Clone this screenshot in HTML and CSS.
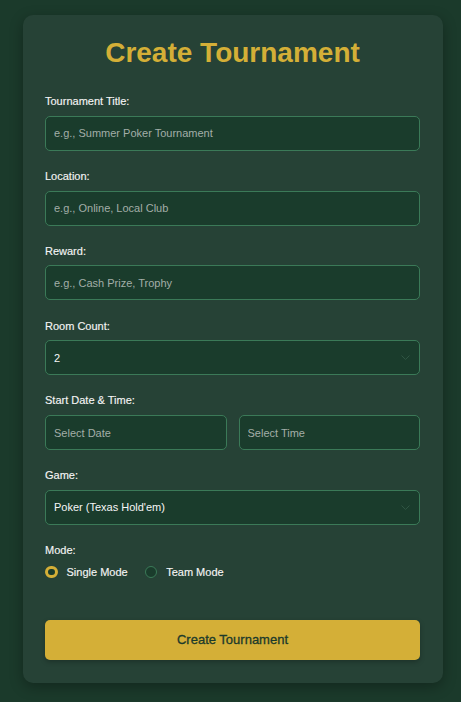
FILE: index.html
```html
<!DOCTYPE html>
<html lang="en">
<head>
<meta charset="utf-8">
<title>Create Tournament</title>
<link rel="stylesheet" href="styles.css">
</head>
<body>
<form class="card">
  <h1 class="title">Create Tournament</h1>

  <div class="group">
    <label class="label" for="t-title">Tournament Title:</label>
    <input class="field" id="t-title" type="text" placeholder="e.g., Summer Poker Tournament">
  </div>

  <div class="group">
    <label class="label" for="t-loc">Location:</label>
    <input class="field" id="t-loc" type="text" placeholder="e.g., Online, Local Club">
  </div>

  <div class="group">
    <label class="label" for="t-reward">Reward:</label>
    <input class="field" id="t-reward" type="text" placeholder="e.g., Cash Prize, Trophy">
  </div>

  <div class="group">
    <label class="label" for="t-rooms">Room Count:</label>
    <div class="select-wrap">
      <select class="field select" id="t-rooms">
        <option>2</option>
      </select>
      <svg class="chevron" width="9" height="5" viewBox="0 0 9 5"><path d="M0.5 0.5 L4.5 4.5 L8.5 0.5" fill="none" stroke="#2f5543" stroke-width="1"/></svg>
    </div>
  </div>

  <div class="group">
    <label class="label" for="t-date">Start Date &amp; Time:</label>
    <div class="row">
      <input class="field" id="t-date" type="text" placeholder="Select Date">
      <input class="field" id="t-time" type="text" placeholder="Select Time">
    </div>
  </div>

  <div class="group">
    <label class="label" for="t-game">Game:</label>
    <div class="select-wrap">
      <select class="field select" id="t-game">
        <option>Poker (Texas Hold'em)</option>
      </select>
      <svg class="chevron" width="9" height="5" viewBox="0 0 9 5"><path d="M0.5 0.5 L4.5 4.5 L8.5 0.5" fill="none" stroke="#2f5543" stroke-width="1"/></svg>
    </div>
  </div>

  <div class="group mode">
    <span class="label">Mode:</span>
    <div class="radios">
      <label class="radio"><input type="radio" name="mode" checked><span>Single Mode</span></label>
      <label class="radio"><input type="radio" name="mode"><span>Team Mode</span></label>
    </div>
  </div>

  <button class="submit" type="button">Create Tournament</button>
</form>
</body>
</html>
```

FILE: styles.css
```css
html, body {
  margin: 0;
  padding: 0;
  background: #1b3a2b;
  min-height: 100%;
}

body {
  font-family: "Liberation Sans", Arial, sans-serif;
  padding: 15px 0 20px 22.5px;
  box-sizing: border-box;
}

.card {
  width: 420px;
  box-sizing: border-box;
  background: #264236;
  border-radius: 10px;
  padding: 22px 22.5px 22.5px;
  box-shadow: 0 4px 14px rgba(0, 0, 0, 0.3);
}

.title {
  margin: 0 0 26px;
  text-align: center;
  color: #d4af37;
  font-size: 28px;
  font-weight: bold;
  line-height: normal;
}

.group {
  margin-bottom: 19.2px;
}

.label {
  display: block;
  color: #f4f4f4;
  font-size: 11px;
  line-height: 12.65px;
  margin-bottom: 8px;
  -webkit-text-stroke: 0.15px #f4f4f4;
}

.field {
  display: block;
  width: 100%;
  height: 35px;
  box-sizing: border-box;
  margin: 0;
  padding: 0 8px;
  font-family: "Liberation Sans", Arial, sans-serif;
  font-size: 11px;
  color: #f6f6f6;
  background: #1a3c2c;
  border: 1px solid #3b7a58;
  border-radius: 5px;
  outline: none;
}

.field::placeholder {
  color: #a3aea8;
  opacity: 1;
}

.select {
  -webkit-appearance: none;
  appearance: none;
}

.select-wrap {
  position: relative;
}

.chevron {
  position: absolute;
  right: 10.5px;
  top: 15px;
  pointer-events: none;
}

.row {
  display: flex;
  gap: 12px;
}

.row .field {
  flex: 1 1 0;
  min-width: 0;
}

.mode {
  margin-bottom: 40px;
}

.radios {
  display: flex;
  align-items: center;
  gap: 17px;
  height: 15px;
}

.radio {
  display: flex;
  align-items: center;
  gap: 9px;
  color: #f4f4f4;
  font-size: 11px;
  -webkit-text-stroke: 0.15px #f4f4f4;
}

.radio input {
  -webkit-appearance: none;
  appearance: none;
  width: 12.5px;
  height: 12.5px;
  margin: 0;
  border-radius: 50%;
  box-sizing: border-box;
  border: 1px solid #3b7a58;
  background: #1a3c2c;
}

.radio input:checked {
  border: 3px solid #d4af37;
  background: #1a3c2c;
}

.submit {
  display: block;
  width: 100%;
  height: 40.5px;
  border: none;
  border-radius: 5px;
  background: #d4af37;
  color: #1b3a2b;
  font-family: "Liberation Sans", Arial, sans-serif;
  font-size: 13px;
  font-weight: 500;
  -webkit-text-stroke: 0.3px #1b3a2b;
  box-shadow: 0 2px 5px rgba(0, 0, 0, 0.25);
  cursor: pointer;
}
```
